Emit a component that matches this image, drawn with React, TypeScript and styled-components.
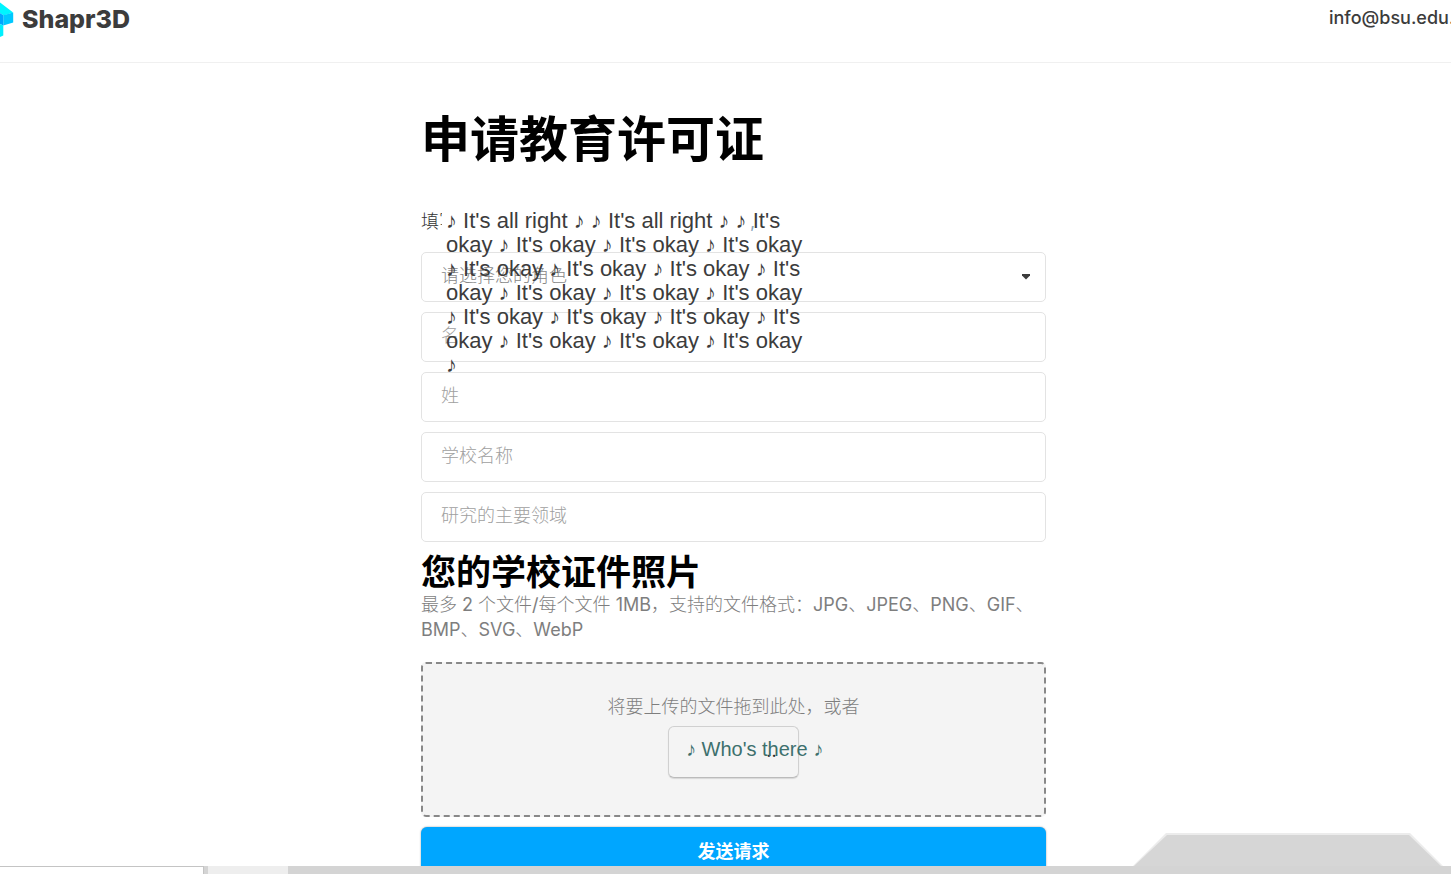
import React from "react";
import styled, { createGlobalStyle, css } from "styled-components";

const sans = `Inter, "Noto Sans CJK SC", sans-serif`;
const lightSans = `Inter, "Noto Sans CJK SC Light", "Noto Sans CJK SC", sans-serif`;
const caption = `"Liberation Sans", Arial, sans-serif`;

const GlobalStyle = createGlobalStyle`
  *, *::before, *::after { box-sizing: border-box; }
  body { margin: 0; background: #fff; color: #3c3c3c; font-family: ${sans}; }
  h1, h2, p { margin: 0; }
`;

const Page = styled.div`
  display: flex;
  flex-direction: column;
  height: 100vh;
  overflow: hidden;
`;

const Header = styled.header`
  display: flex;
  flex: none;
  justify-content: space-between;
  height: 63px;
  border-bottom: 1px solid #f0f0f0;
`;

const Brand = styled.a`
  display: flex;
  gap: 8px;
  height: 38px;
  align-items: center;
  color: #3c3c3c;
  text-decoration: none;
  font-size: 25px;
  line-height: 38px;
  font-weight: 800;

  svg { display: block; }
`;

const Account = styled.a`
  width: 122px;
  overflow: hidden;
  white-space: nowrap;
  color: #3c3c3c;
  text-decoration: none;
  font-size: 18px;
  font-weight: 500;
  line-height: 36px;
`;

const Content = styled.main`
  position: relative;
  flex: 1;
  min-height: 0;
  overflow: hidden;
  padding: 41px 0 0 16px;
`;

const Form = styled.form`
  position: relative;
  display: flex;
  flex-direction: column;
  width: 100%;
  max-width: 625px;
  margin: 0 auto;
`;

const Title = styled.h1`
  color: #000;
  font-size: 49px;
  line-height: 72px;
  font-weight: 700;
`;

const Intro = styled.p`
  display: flex;
  margin-top: 33px;
  height: 43px;
  color: #333;
  font-family: ${lightSans};
  font-size: 18px;
  line-height: 26px;
`;

const IntroCover = styled.span`
  position: relative;
  width: 308px;
  height: 26px;
  margin-left: -15px;
  background: #fff;
`;

const IntroEnd = styled.span`
  color: #8aa4bc;
`;

const Fields = styled.div`
  display: flex;
  flex-direction: column;
  gap: 10px;
`;

const fieldBox = css`
  display: block;
  width: 100%;
  height: 50px;
  padding: 0 19px 4px;
  border: 1px solid #e3e3e3;
  border-radius: 5px;
  background: #fff;
  color: #a0a0a0;
  font-family: ${sans};
  font-size: 18px;
  font-weight: 300;
  outline: none;
`;

const Input = styled.input`
  ${fieldBox}
  &::placeholder { color: #a0a0a0; opacity: 1; }
`;

const SelectWrap = styled.div`
  position: relative;
`;

const Select = styled.select`
  ${fieldBox}
  appearance: none;
  color: #888;
`;

const Arrow = styled.svg`
  position: absolute;
  right: 15px;
  top: 22px;
  pointer-events: none;
`;

const Subtitle = styled.h2`
  margin-top: 10px;
  color: #000;
  font-size: 35px;
  line-height: 40px;
  font-weight: 700;
`;

const Hint = styled.p`
  color: #7e7e7e;
  font-family: ${lightSans};
  font-size: 18px;
  line-height: 25px;
`;

const DropZone = styled.div`
  display: flex;
  flex-direction: column;
  align-items: center;
  height: 155px;
  margin-top: 20px;
  padding-top: 30px;
  border: 2px dashed #888;
  border-radius: 5px;
  background: #f4f4f4;
`;

const BrowseArea = styled.div`
  position: relative;
  margin-top: 7px;
`;

const BrowseButton = styled.button`
  display: block;
  width: 131px;
  height: 52px;
  padding: 0 0 4px 76px;
  border: 1px solid #d0d0d0;
  border-bottom-color: #bbb;
  border-radius: 6px;
  background: #f4f4f4;
  box-shadow: 0 1px 1px rgba(0, 0, 0, 0.12);
  color: #222;
  font-family: ${sans};
  font-size: 18px;
`;

const ButtonCaption = styled.span`
  position: absolute;
  left: 18px;
  top: 10px;
  color: #3d706d;
  font-family: ${caption};
  font-size: 20px;
  line-height: 26px;
  white-space: nowrap;
  pointer-events: none;
`;

const Submit = styled.button`
  height: 50px;
  margin-top: 10px;
  padding: 0 0 4px;
  border: 0;
  border-radius: 6px;
  background: #00a6ff;
  box-shadow: 0 0 2px rgba(0, 0, 0, 0.4);
  color: #fff;
  font-family: ${sans};
  font-size: 18px;
  font-weight: 700;
`;

const Lyrics = styled.p`
  position: absolute;
  left: 25px;
  top: 105px;
  width: 364px;
  color: #3c3c3c;
  font-family: ${caption};
  font-size: 22px;
  line-height: 24px;
  pointer-events: none;
`;

const Tab = styled.svg`
  position: absolute;
  right: 8px;
  bottom: 0;
`;

const Footer = styled.footer`
  display: flex;
  flex: none;
  height: 8px;
  background: #d4d4d4;
`;

const FooterPanel = styled.div`
  width: 204px;
  border-top: 1px solid #c4c4c4;
  border-right: 1px solid #c4c4c4;
  background: #fff;
`;

const FooterTab = styled.div`
  width: 80px;
  margin-left: 4px;
  background: #eee;
`;

const textFields = [
  { name: "firstName", label: "名" },
  { name: "lastName", label: "姓" },
  { name: "school", label: "学校名称" },
  { name: "field", label: "研究的主要领域" },
];

const lyrics =
  "♪ It's all right ♪ ♪ It's all right ♪ ♪ It's okay" + " ♪ It's okay".repeat(17) + " ♪";

export default function App() {
  return (
    <>
      <GlobalStyle />
      <Page>
        <Header>
          <Brand href="#">
            <svg width="14" height="38" viewBox="0 0 14 38" aria-hidden="true">
              <path d="M0 2.5 13.2 12.5 3.5 15.5 0 13Z" fill="#00f5ff" />
              <path d="M3.3 15.3 13.2 12.5V22.5L3.3 25.5Z" fill="#00c8ff" />
              <path d="M0 13 3.3 15.3V25.5L0 24Z" fill="#00a6ff" />
              <path d="M0 24 3.3 25.5V35.5L0 37Z" fill="#00f0ff" />
            </svg>
            Shapr3D
          </Brand>
          <Account href="#">info@bsu.edu.</Account>
        </Header>
        <Content>
          <Form onSubmit={(e) => e.preventDefault()}>
            <Title>申请教育许可证</Title>
            <Intro>
              填写
              <IntroCover />
              <IntroEnd>,</IntroEnd>
            </Intro>
            <Fields>
              <SelectWrap>
                <Select aria-label="请选择您的角色" defaultValue="">
                  <option value="">请选择您的角色</option>
                </Select>
                <Arrow width="10" height="6" viewBox="0 0 10 6" aria-hidden="true">
                  <path d="M1 0H9V1.5L5 5.5L1 1.5Z" fill="#3c3c3c" />
                </Arrow>
              </SelectWrap>
              {textFields.map((f) => (
                <Input key={f.name} name={f.name} aria-label={f.label} placeholder={f.label} />
              ))}
            </Fields>
            <Subtitle>您的学校证件照片</Subtitle>
            <Hint>
              最多 2 个文件/每个文件 1MB，支持的文件格式：JPG、JPEG、PNG、GIF、BMP、SVG、WebP
            </Hint>
            <DropZone>
              <Hint>将要上传的文件拖到此处，或者</Hint>
              <BrowseArea>
                <BrowseButton type="button">..</BrowseButton>
                <ButtonCaption>♪ Who's there ♪</ButtonCaption>
              </BrowseArea>
            </DropZone>
            <Submit type="submit">发送请求</Submit>
            <Lyrics>{lyrics}</Lyrics>
          </Form>
          <Tab width="310" height="34" viewBox="0 0 310 34" aria-hidden="true">
            <path d="M0 34 33 1H277L310 34Z" fill="#ececec" />
            <path d="M1 34 34 3H276L308 34Z" fill="#d6d6d6" />
          </Tab>
        </Content>
        <Footer>
          <FooterPanel />
          <FooterTab />
        </Footer>
      </Page>
    </>
  );
}
